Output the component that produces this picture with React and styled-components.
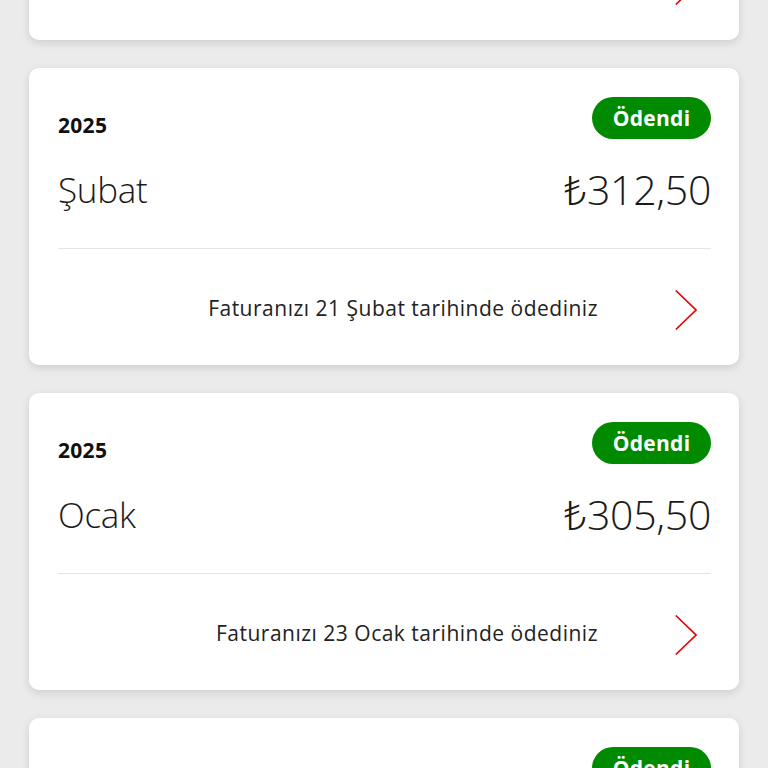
import React from "react";
import styled, { createGlobalStyle } from "styled-components";

const Global = createGlobalStyle`
  html, body { margin: 0; padding: 0; background: #ebebeb; }
  body { font-family: "Open Sans", "Noto Sans", sans-serif; color: #1a1a1a; overflow: hidden; }
`;

const Page = styled.div`
  width: 768px;
  height: 768px;
  overflow: hidden;
  background: #ebebeb;
`;

const List = styled.div`
  display: flex;
  flex-direction: column;
  gap: 28px;
  padding: 0 29px;
  margin-top: -257px;
`;

const Card = styled.div`
  background: #fff;
  border-radius: 10px;
  box-shadow: 0 3px 8px rgba(0, 0, 0, 0.12);
  padding: 29px 28px 35px 29px;
  display: flex;
  flex-direction: column;
`;

const TopRow = styled.div`
  display: flex;
  justify-content: space-between;
  align-items: flex-end;
  height: 42px;
`;

const Year = styled.div`
  font-size: 21px;
  font-weight: 700;
  line-height: 24px;
  margin-bottom: 2px;
  letter-spacing: 0.3px;
  color: #111;
`;

const Badge = styled.div`
  height: 42px;
  min-width: 119px;
  box-sizing: border-box;
  border-radius: 21px;
  background: #008a00;
  color: #fff;
  font-size: 21px;
  font-weight: 700;
  letter-spacing: 0.3px;
  display: flex;
  align-items: center;
  justify-content: center;
  padding: 0 18px;
`;

const MainRow = styled.div`
  display: flex;
  justify-content: space-between;
  align-items: center;
  height: 48px;
  margin-top: 26px;
  margin-bottom: 2px;
`;

const Month = styled.div`
  font-size: 35px;
  font-weight: 300;
  color: #1a1a1a;
  letter-spacing: -0.3px;
`;

const Amount = styled.div`
  font-size: 41px;
  font-weight: 300;
  color: #1a1a1a;
  letter-spacing: -0.3px;
`;

const Divider = styled.div`
  height: 1px;
  background: #e4e4e4;
  margin-top: 33px;
`;

const Footer = styled.div`
  display: flex;
  justify-content: flex-end;
  align-items: center;
  height: 40px;
  margin-top: 41px;
  padding-right: 14px;
  gap: 77px;
`;

const FooterText = styled.div`
  font-size: 21px;
  font-weight: 400;
  color: #222;
  letter-spacing: 0.5px;
  margin-bottom: 4px;
`;

const Chevron = () => (
  <svg width="22" height="40" viewBox="0 0 22 40" fill="none">
    <path d="M0.8 0.5 L21 20 L0.8 39.5" stroke="#e60000" strokeWidth="1.6" />
  </svg>
);

const bills = [
  { year: "2025", month: "Mart", amount: "₺312,50", note: "Faturanızı 21 Mart tarihinde ödediniz" },
  { year: "2025", month: "Şubat", amount: "₺312,50", note: "Faturanızı 21 Şubat tarihinde ödediniz" },
  { year: "2025", month: "Ocak", amount: "₺305,50", note: "Faturanızı 23 Ocak tarihinde ödediniz" },
  { year: "2024", month: "Aralık", amount: "₺305,50", note: "Faturanızı 22 Aralık tarihinde ödediniz" },
];

export default function App() {
  return (
    <Page>
      <Global />
      <List>
        {bills.map((b, i) => (
          <Card key={i}>
            <TopRow>
              <Year>{b.year}</Year>
              <Badge>Ödendi</Badge>
            </TopRow>
            <MainRow>
              <Month>{b.month}</Month>
              <Amount>{b.amount}</Amount>
            </MainRow>
            <Divider />
            <Footer>
              <FooterText>{b.note}</FooterText>
              <Chevron />
            </Footer>
          </Card>
        ))}
      </List>
    </Page>
  );
}
